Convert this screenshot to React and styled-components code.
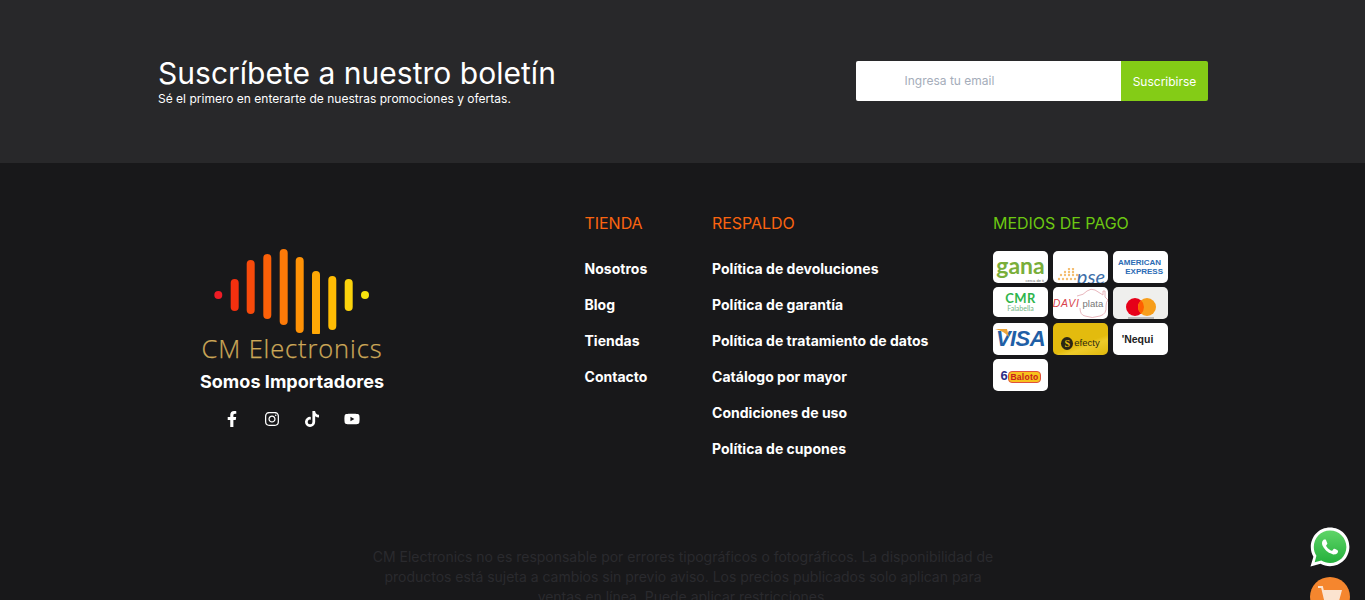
import React from "react";
import styled, { createGlobalStyle } from "styled-components";
import { FaFacebookF, FaInstagram, FaTiktok, FaYoutube } from "react-icons/fa";

const Global = createGlobalStyle`
  html, body { margin: 0; padding: 0; background: #18181a; }
  body { font-family: Inter, "Liberation Sans", sans-serif; }
  #root { height: 600px; overflow: hidden; }
  * { box-sizing: border-box; }
`;

const Newsletter = styled.section`
  height: 163px;
  background: #28282a;
  padding: 0 157px 0 158px;
  display: flex;
  justify-content: space-between;
  align-items: flex-start;
`;
const NewsText = styled.div`
  padding-top: 55px;
  color: #fff;
`;
const NewsTitle = styled.h2`
  margin: 0;
  font-size: 30px;
  line-height: 36px;
  font-weight: 400;
  letter-spacing: 0.02px;
`;
const NewsSub = styled.p`
  margin: 0;
  font-size: 12px;
  line-height: 16px;
  letter-spacing: 0.01px;
`;
const Form = styled.form`
  margin-top: 61px;
  width: 352px;
  height: 40px;
  display: flex;
  border-radius: 2px;
  overflow: hidden;
`;
const Email = styled.input`
  flex: 1;
  min-width: 0;
  border: 0;
  outline: 0;
  background: #fff;
  padding: 0 0 2px 48.500px;
  font: 400 12px Inter, sans-serif;
  &::placeholder { color: #a5adba; opacity: 1; }
`;
const Submit = styled.button`
  width: 87px;
  border: 0;
  background: #84cc16;
  color: #fff;
  font: 400 12px Inter, sans-serif;
  padding: 0;
`;

const Footer = styled.footer`
  position: relative;
  background: #18181a;
  padding: 48px 0 0 158px;
`;
const Columns = styled.div`
  display: grid;
  grid-template-columns: 426.500px 127.500px 281px 190px;
  height: 336px;
`;
const Brand = styled.div`
  width: 268px;
  padding-top: 33px;
  display: flex;
  flex-direction: column;
  align-items: center;
  color: #fff;
`;
const LogoMark = styled.svg`
  display: block;
  width: 160px;
  height: 90px;
`;
const LogoName = styled.div`
  margin-top: -1px;
  font-family: "Open Sans", sans-serif;
  font-size: 25.500px;
  line-height: 30px;
  font-weight: 300;
  letter-spacing: 0.87px;
  color: #cda858;
  -webkit-text-stroke: 0.25px #cda858;
`;
const Tagline = styled.div`
  margin-top: 7px;
  font-size: 18px;
  line-height: 24px;
  font-weight: 700;
  letter-spacing: 0.04px;
`;
const Socials = styled.div`
  margin-top: 17px;
  display: flex;
  gap: 24px;
  font-size: 16px;
  color: #fff;
  & svg { display: block; }
`;
const ColTitle = styled.h3`
  margin: 0 0 24px;
  font-size: 16px;
  line-height: 24px;
  font-weight: 400;
  letter-spacing: -0.04px;
  color: ${p => p.$green ? "#6cc712" : "#fb6410"};
`;
const Links = styled.ul`
  list-style: none;
  margin: 0;
  padding: 0;
  display: flex;
  flex-direction: column;
  gap: 16px;
`;
const LinkItem = styled.li`
  font-size: 14px;
  line-height: 20px;
  font-weight: 700;
  letter-spacing: 0.02px;
  color: #fff;
  white-space: nowrap;
`;
const Pay = styled.div`
  display: grid;
  grid-template-columns: repeat(3, 55px);
  grid-auto-rows: 32px;
  column-gap: 5px;
  row-gap: 4px;
  margin-top: -8px;
  align-items: start;
`;
const Tile = styled.div`
  position: relative;
  overflow: hidden;
  height: ${p => p.$h || 32}px;
  border-radius: 5px;
  background: ${p => p.$bg || "#fff"};
  display: flex;
  flex-direction: column;
  align-items: center;
  justify-content: center;
  white-space: nowrap;
`;
const Gana = styled.span`
  font: 700 23px/20px Lato, sans-serif;
  margin-top: -4px;
  color: #79ae3a;
`;
const GanaNote = styled.span`
  position: absolute;
  right: 4px;
  bottom: 0;
  font: 400 4px/5px "Liberation Sans", sans-serif;
  color: #666;
`;
const Pse = styled.span`
  position: absolute;
  right: 3px;
  bottom: -3px;
  font: italic 400 20px/20px Lato, sans-serif;
  color: #3d6ea8;
`;
const PseDots = styled.svg`
  position: absolute;
  left: 4px;
  bottom: 1px;
  width: 22px;
  height: 14px;
`;
const Amex = styled.span`
  font: 700 8px/9px "Liberation Sans", sans-serif;
  color: #2b6cb5;
  text-align: ${p => p.$end ? "right" : "left"};
  align-self: ${p => p.$end ? "flex-end" : "flex-start"};
  margin: ${p => p.$end ? "0 5px 0 0" : "0 0 0 5px"};
`;
const Cmr = styled.span`
  font: 700 13px/12px Lato, sans-serif;
  letter-spacing: 0.4px;
  color: #2fb54c;
`;
const Falabella = styled.span`
  font: 400 7px/8px Lato, sans-serif;
  color: #74b583;
`;
const Davi = styled.span`
  position: relative;
  margin-right: 5px;
  font: 400 9.500px/12px "Liberation Sans", sans-serif;
  color: #777;
`;
const DaviRed = styled.span`
  font-size: 10.500px;
  font-style: italic;
  margin-right: 3px;
  letter-spacing: 0.7px;
  color: #d8434c;
`;
const House = styled.svg`
  position: absolute;
  right: 0;
  top: 1px;
  width: 32px;
  height: 31px;
`;
const Visa = styled.span`
  font: italic 700 22px/24px "Liberation Sans", sans-serif;
  letter-spacing: -0.6px;
  color: #1f5fa6;
`;
const VisaFlash = styled.svg`
  position: absolute;
  left: 2px;
  top: 6px;
  width: 14px;
  height: 8px;
`;
const Efecty = styled.span`
  display: flex;
  align-items: center;
  gap: 1px;
  margin-top: 8px;
  font: 400 9.500px/14px "Liberation Sans", sans-serif;
  color: #2c2a10;
`;
const EfectyBadge = styled.span`
  width: 12px;
  height: 13px;
  border-radius: 50%;
  background: #2a2614;
  color: #e3bb0e;
  font: 700 10px/13px "Liberation Serif", serif;
  text-align: center;
`;
const Nequi = styled.span`
  margin-right: 6px;
  font: 700 10.500px/12px "Liberation Sans", sans-serif;
  color: #222;
`;
const Baloto = styled.span`
  display: flex;
  align-items: flex-end;
`;
const BalotoBall = styled.span`
  width: 9px;
  height: 15px;
  font: 700 13px/15px "Liberation Sans", sans-serif;
  color: #2c2f86;
  margin-right: -1px;
  z-index: 1;
`;
const BalotoName = styled.span`
  padding: 0 1px;
  border-radius: 4px;
  background: #f6c21c;
  border: 1px solid #e0503c;
  font: 700 8.500px/10px "Liberation Sans", sans-serif;
  letter-spacing: 0.3px;
  color: #c8201c;
`;
const Disclaimer = styled.p`
  margin: 0 0 0 205px;
  width: 640px;
  text-align: center;
  font-size: 14px;
  line-height: 20px;
  letter-spacing: -0.02px;
  color: #2a2a2e;
`;
const Floating = styled.div`
  position: fixed;
  right: 15px;
  top: 527px;
  display: flex;
  flex-direction: column;
  gap: 10px;
  align-items: center;
`;
const Round = styled.svg`
  display: block;
  width: 40px;
  height: 40px;
`;

const bars = [
  [234.7, 279, 311, "#f4300f"],
  [250.7, 260, 314, "#f74a0b"],
  [267.3, 254, 319, "#fb6008"],
  [283.7, 249, 325, "#fd7a08"],
  [299.7, 257, 333, "#ff9206"],
  [316, 271, 336, "#ffa805"],
  [332.3, 276, 330, "#ffbc04"],
  [348.7, 279, 311, "#fbd30c"],
];

function Logo() {
  return (
    <LogoMark viewBox="212 244 160 90">
      <circle cx="218.3" cy="295" r="4" fill="#ee1c25" />
      {bars.map(([x, a, b, c]) => (
        <line key={x} x1={x} x2={x} y1={a + 4} y2={b - 4} stroke={c} strokeWidth="8" strokeLinecap="round" />
      ))}
      <circle cx="365" cy="295" r="4" fill="#f7e30e" />
    </LogoMark>
  );
}

export default function App() {
  return (
    <>
      <Global />
      <Newsletter>
        <NewsText>
          <NewsTitle>Suscríbete a nuestro boletín</NewsTitle>
          <NewsSub>Sé el primero en enterarte de nuestras promociones y ofertas.</NewsSub>
        </NewsText>
        <Form onSubmit={e => e.preventDefault()}>
          <Email placeholder="Ingresa tu email" />
          <Submit>Suscribirse</Submit>
        </Form>
      </Newsletter>
      <Footer>
        <Columns>
          <Brand>
            <Logo />
            <LogoName>CM Electronics</LogoName>
            <Tagline>Somos Importadores</Tagline>
            <Socials>
              <FaFacebookF />
              <FaInstagram />
              <FaTiktok />
              <FaYoutube />
            </Socials>
          </Brand>
          <div>
            <ColTitle>TIENDA</ColTitle>
            <Links>
              {["Nosotros", "Blog", "Tiendas", "Contacto"].map(t => <LinkItem key={t}>{t}</LinkItem>)}
            </Links>
          </div>
          <div>
            <ColTitle>RESPALDO</ColTitle>
            <Links>
              {["Política de devoluciones", "Política de garantía", "Política de tratamiento de datos", "Catálogo por mayor", "Condiciones de uso", "Política de cupones"].map(t => <LinkItem key={t}>{t}</LinkItem>)}
            </Links>
          </div>
          <div>
            <ColTitle $green>MEDIOS DE PAGO</ColTitle>
            <Pay>
              <Tile><Gana>gana</Gana><GanaNote>cerca de ti</GanaNote></Tile>
              <Tile>
                <PseDots viewBox="0 0 22 14">
                  {[[12,1],[16,1],[8,4],[12,4],[16,4],[4,7],[8,7],[12,7],[16,7],[20,7],[2,11],[6,11],[10,11],[14,11],[18,11]].map(([x, y]) => (
                    <circle key={`${x}-${y}`} cx={x} cy={y} r="1.200" fill="#f4bd6f" />
                  ))}
                </PseDots>
                <Pse>pse</Pse>
              </Tile>
              <Tile><Amex>AMERICAN</Amex><Amex $end>EXPRESS</Amex></Tile>
              <Tile $h={30}><Cmr>CMR</Cmr><Falabella>Falabella</Falabella></Tile>
              <Tile>
                <House viewBox="0 0 32 31">
                  <path d="M1 8 Q8 7 11 3 Q15 0 19 2 L27 7 V3 H29 V9 L32 12 Q30 14 30 18 Q31 26 24 28 Q16 31 9 28 Q4 27 4 20" fill="none" stroke="#e2a3ab" strokeWidth="0.800" />
                </House>
                <Davi><DaviRed>DAVI</DaviRed>plata</Davi>
              </Tile>
              <Tile $bg="#efefed">
                <svg width="32" height="30" viewBox="0 0 32 30" style={{ marginTop: 2 }}>
                  <circle cx="10" cy="18" r="9" fill="#e60019" />
                  <circle cx="22" cy="18" r="9" fill="#f79e1b" />
                  <path d="M16 11.300a9 9 0 0 1 0 13.400a9 9 0 0 1 0-13.400z" fill="#ff5f00" />
                  <rect x="3" y="28.500" width="26" height="1" fill="#888" />
                </svg>
              </Tile>
              <Tile>
                <VisaFlash viewBox="0 0 14 8"><path d="M0 0 H12 L14 8 Q9 2 0 0z" fill="#eaa53a" /></VisaFlash>
                <Visa>VISA</Visa>
              </Tile>
              <Tile $bg="linear-gradient(160deg, #e3bb0e 0%, #e3bb0e 60%, #eecb2a 70%, #dfb70c 100%)">
                <Efecty><EfectyBadge>S</EfectyBadge>efecty</Efecty>
              </Tile>
              <Tile><Nequi>'Nequi</Nequi></Tile>
              <Tile><Baloto><BalotoBall>6</BalotoBall><BalotoName>Baloto</BalotoName></Baloto></Tile>
            </Pay>
          </div>
        </Columns>
        <Disclaimer>
          CM Electronics no es responsable por errores tipográficos o fotográficos. La disponibilidad de productos está sujeta a cambios sin previo aviso. Los precios publicados solo aplican para ventas en línea. Puede aplicar restricciones.
        </Disclaimer>
      </Footer>
      <Floating>
        <Round viewBox="0 0 40 40">
          <defs>
            <linearGradient id="wa" x1="0" y1="0" x2="0" y2="1">
              <stop offset="0" stopColor="#5fd568" />
              <stop offset="1" stopColor="#25b03c" />
            </linearGradient>
          </defs>
          <path d="M20 .5C9.200 .5 .8 9.200 .8 20c0 3.600 1 6.900 2.600 9.800L.5 39.500l10-2.700c2.800 1.500 6 2.400 9.500 2.400 10.800 0 19.400-8.600 19.400-19.400S30.800 .5 20 .5z" fill="#fff" />
          <path d="M20 3.500C10.900 3.500 3.800 10.900 3.800 20c0 3.300 1 6.300 2.600 8.800L4.700 35.200l6.600-1.700c2.500 1.500 5.500 2.500 8.700 2.500 9.100 0 16.400-7 16.400-16S29.100 3.500 20 3.500z" fill="url(#wa)" />
          <g transform="translate(4 4) scale(1.33)">
            <path d="M17.472 14.382c-.297-.149-1.758-.867-2.03-.967-.273-.099-.471-.148-.67.15-.197.297-.767.966-.94 1.164-.173.199-.347.223-.644.075-.297-.15-1.255-.463-2.39-1.475-.883-.788-1.48-1.761-1.653-2.059-.173-.297-.018-.458.13-.606.134-.133.298-.347.446-.52.149-.174.198-.298.298-.497.099-.198.05-.371-.025-.52-.075-.149-.669-1.612-.916-2.207-.242-.579-.487-.5-.669-.51-.173-.008-.371-.01-.57-.01-.198 0-.52.074-.792.372-.272.297-1.04 1.016-1.04 2.479 0 1.462 1.065 2.875 1.213 3.074.149.198 2.096 3.2 5.077 4.487.709.306 1.262.489 1.694.625.712.227 1.36.195 1.871.118.571-.085 1.758-.719 2.006-1.413.248-.694.248-1.289.173-1.413-.074-.124-.272-.198-.57-.347" fill="#fff" />
          </g>
        </Round>
        <Round viewBox="0 0 40 40">
          <circle cx="20" cy="20" r="20" fill="#f5862e" />
          <path d="M8 10h4l4 17h14" fill="none" stroke="#fbe3cf" strokeWidth="2" />
          <path d="M13 13h19l-3 11H15.500z" fill="#fbe3cf" />
        </Round>
      </Floating>
    </>
  );
}
